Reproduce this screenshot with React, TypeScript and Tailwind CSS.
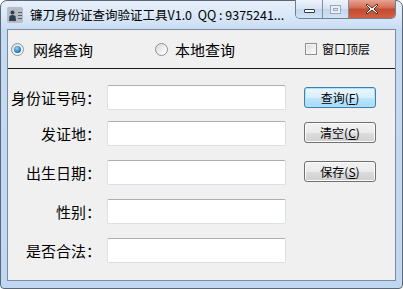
import { type ReactNode } from "react";

const cjk = "font-['Noto_Sans_CJK_SC','Noto_Sans',sans-serif]";

const fields = [
  { label: "身份证号码：", top: "mt-[16px]" },
  { label: "发证地：", top: "mt-[11px]" },
  { label: "出生日期：", top: "mt-[14px]" },
  { label: "性别：", top: "mt-[14px]" },
  { label: "是否合法：", top: "mt-[14px]" },
];

function Btn({ children, primary }: { children: ReactNode; primary?: boolean }) {
  return (
    <button
      className={`flex h-[21px] w-[72px] items-center justify-center rounded-[3px] border text-[12px] leading-none text-black ${
        primary
          ? "border-[#3c7fb1] shadow-[inset_0_0_0_1px_#aee2f8] bg-[linear-gradient(#eaf6fd_0%,#d9f0fc_50%,#bee6fd_51%,#a7d9f5_100%)]"
          : "border-[#707070] shadow-[inset_0_0_0_1px_#fbfbfb] bg-[linear-gradient(#f2f2f2_0%,#ebebeb_50%,#dddddd_51%,#cfcfcf_100%)]"
      }`}
    >
      {children}
    </button>
  );
}

function Radio({ on }: { on?: boolean }) {
  return (
    <span className="flex h-[13px] w-[13px] items-center justify-center rounded-full border border-[#8e8f8f] bg-[linear-gradient(135deg,#dcdcdc,#ffffff)]">
      {on && (
        <span className="h-[7px] w-[7px] rounded-full bg-[radial-gradient(circle_at_40%_35%,#8ad4ff,#1a6fb5_70%,#0d3f78)]" />
      )}
    </span>
  );
}

export default function App() {
  return (
    <div className={`${cjk} h-[289px] w-[403px] overflow-hidden bg-white`}>
      <div className="flex h-full w-full flex-col rounded-t-[7px] rounded-b-[4px] border border-[#5b6774] bg-[linear-gradient(#e7f0fa_0px,#d4e4f7_20px,#c5daf3_30px,#c0d7f2_100%)]">
        {/* title bar */}
        <div className="flex h-[28px] items-start">
          <div className="ml-[6px] mt-[6px] flex h-[16px] w-[16px] items-center gap-[2px] rounded-[2px] bg-[#b7bcc4] pl-[2px]">
            <svg width="7" height="11" viewBox="0 0 7 11">
              <circle cx="3.5" cy="2.5" r="2" fill="#2f3e4e" />
              <path d="M0 11 L0.5 6 Q3.5 4 6.5 6 L7 11 Z" fill="#2f3e4e" />
            </svg>
            <div className="flex flex-col gap-[2px]">
              <span className="h-px w-[4px] bg-[#56616d]" />
              <span className="h-px w-[4px] bg-[#56616d]" />
              <span className="h-px w-[4px] bg-[#56616d]" />
            </div>
          </div>
          <div className="ml-[7px] mt-[6px] w-[262px] whitespace-nowrap text-[12.5px] leading-[15px] text-black">
            镰刀身份证查询验证工具V1.0&nbsp;&nbsp;QQ : 9375241...
          </div>
          <div className="ml-auto mr-[6px] flex h-[19px] -mt-px overflow-hidden rounded-b-[5px] border border-t-0 border-[#6d7f95]">
            <div className="flex w-[27px] items-center justify-center border-r border-[#7d8fa4] bg-[linear-gradient(#eef4fb,#d6e3f3_50%,#c5d6ec_51%,#d3e2f4)]">
              <span className="mt-[4px] h-[4px] w-[11px] rounded-[1px] border border-[#2c3b4d] bg-white" />
            </div>
            <div className="flex w-[26px] items-center justify-center border-r border-[#7d8fa4] bg-[linear-gradient(#eef4fb,#d6e3f3_50%,#c5d6ec_51%,#d3e2f4)]">
              <span className="flex h-[9px] w-[11px] items-center justify-center border border-[#9aa9bb] bg-[#e9eff7]">
                <span className="h-[3px] w-[5px] border border-[#9aa9bb]" />
              </span>
            </div>
            <div className="flex w-[46px] items-center justify-center bg-[linear-gradient(#e8a493,#d26b52_45%,#c24a2f_50%,#d5603f_100%)]">
              <svg width="14" height="12" viewBox="0 0 14 12">
                <path
                  d="M2 1 L7 5 L12 1 L13 2 L9 6 L13 10 L12 11 L7 7 L2 11 L1 10 L5 6 L1 2 Z"
                  fill="#ffffff"
                  stroke="#47322c"
                  strokeWidth="1"
                  strokeLinejoin="round"
                />
              </svg>
            </div>
          </div>
        </div>

        {/* client area */}
        <div className="mx-[6px] mb-[7px] flex flex-1 flex-col border border-[#7c8b9c] bg-[#f0f0f0]">
          <div className="flex h-[38px] items-center text-black">
            <div className="ml-[3px] flex items-center gap-[9px]">
              <Radio on />
              <span className="text-[15px] leading-none">网络查询</span>
            </div>
            <div className="ml-[62px] flex items-center gap-[7px]">
              <Radio />
              <span className="text-[15px] leading-none">本地查询</span>
            </div>
            <div className="ml-auto mr-[25px] flex items-center gap-[5px]">
              <span className="h-[12px] w-[12px] border border-[#8e8f8f] bg-[linear-gradient(135deg,#dadada,#ffffff)] shadow-[inset_0_0_0_1px_#f4f4f4]" />
              <span className="text-[12px] leading-none">窗口顶层</span>
            </div>
          </div>
          <div className="h-px bg-[#1a1a1a]" />

          <div className="flex">
            <div className="flex flex-col">
              {fields.map((f) => (
                <div key={f.label} className={`${f.top} flex h-[25px] items-center`}>
                  <span className="mr-[6px] w-[93px] text-right text-[15px] leading-none text-black">
                    {f.label}
                  </span>
                  <div className="h-[25px] w-[179px] rounded-[2px] border border-[#dbdfe6] border-t-[#abadb3] bg-white" />
                </div>
              ))}
            </div>
            <div className="ml-[18px] mt-[18px] flex flex-col gap-[14px]">
              <Btn primary>
                查询(<u>F</u>)
              </Btn>
              <Btn>
                清空(<u>C</u>)
              </Btn>
              <div className="mt-[4px]">
                <Btn>
                  保存(<u>S</u>)
                </Btn>
              </div>
            </div>
          </div>
        </div>
      </div>
    </div>
  );
}
